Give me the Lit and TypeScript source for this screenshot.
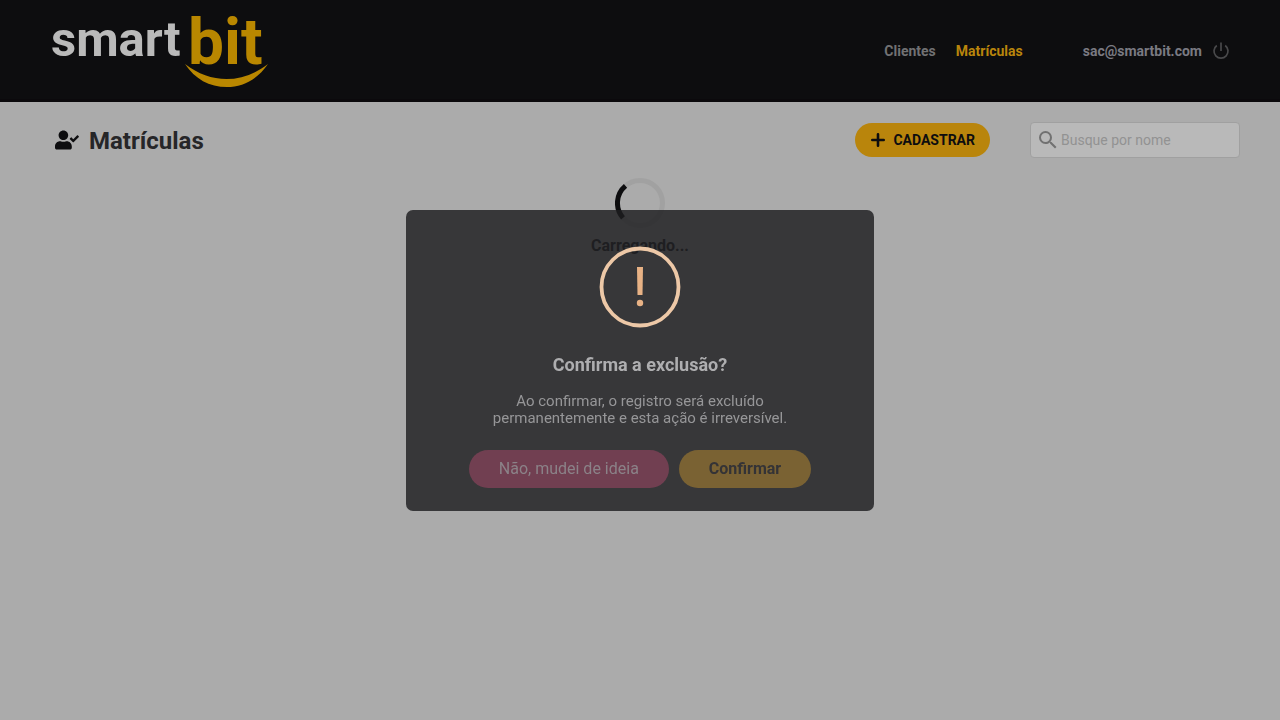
import { LitElement, html, css, svg } from "lit";
import { customElement, state } from "lit/decorators.js";

@customElement("app-root")
export class AppRoot extends LitElement {
  static styles = css`
    :host {
      display: block;
      min-height: 100vh;
      background: #ababab;
      color: #262628;
      font-family: Roboto, sans-serif;
      font-size: 14px;
    }
    * {
      box-sizing: border-box;
    }
    button,
    input {
      font: inherit;
      margin: 0;
    }
    header {
      height: 102px;
      padding: 0 50px;
      background: #0d0d0f;
      box-shadow: inset 0 -3px #0b090c;
      display: flex;
      align-items: center;
      justify-content: space-between;
    }
    .logo svg {
      display: block;
      overflow: visible;
    }
    .smart {
      font-size: 49px;
      font-weight: 700;
      fill: #bababa;
    }
    .bit {
      font-size: 64px;
      font-weight: 700;
      fill: #b98700;
    }
    .smile {
      fill: #b98700;
    }
    nav,
    .account {
      display: flex;
      align-items: center;
    }
    nav {
      gap: 20px;
      margin-left: auto;
      margin-right: 60px;
    }
    a {
      color: #717173;
      font-weight: 700;
      text-decoration: none;
    }
    a.active {
      color: #b9850c;
    }
    .account {
      gap: 10px;
      color: #7a7a82;
      font-weight: 700;
    }
    .power {
      display: flex;
      padding: 0;
      border: 0;
      background: none;
      color: #49494b;
    }
    .toolbar {
      display: flex;
      align-items: center;
      padding: 20px 40px 0 55px;
    }
    h1 {
      display: flex;
      align-items: flex-start;
      gap: 10px;
      margin: 0;
      padding-top: 2px;
      font-size: 24px;
      line-height: 28px;
    }
    h1 svg {
      margin-top: 3px;
      color: #0d0d0f;
    }
    .add {
      display: flex;
      align-items: center;
      gap: 8px;
      height: 34px;
      margin-left: auto;
      padding: 0 15px 0 16px;
      border: 0;
      border-radius: 17px;
      background: #b9850c;
      color: #0d0d0f;
      font-weight: 700;
    }
    .search {
      display: flex;
      align-items: center;
      gap: 1px;
      width: 210px;
      height: 36px;
      margin-left: 40px;
      padding-left: 5px;
      border: 1px solid #a0a0a0;
      border-radius: 4px;
      background: #b9b9b9;
      color: #717171;
    }
    .search input {
      flex: 1;
      min-width: 0;
      padding: 0;
      border: 0;
      outline: 0;
      background: none;
    }
    .search input::placeholder {
      color: #929292;
      opacity: 1;
    }
    .loading {
      display: flex;
      flex-direction: column;
      align-items: center;
      gap: 8px;
      padding-top: 20px;
      font-size: 16px;
      line-height: 19px;
      font-weight: 700;
    }
    .spinner {
      width: 50px;
      height: 50px;
    }
    .backdrop {
      position: fixed;
      inset: 0;
      display: flex;
      align-items: center;
      justify-content: center;
    }
    .modal {
      display: flex;
      flex-direction: column;
      align-items: center;
      width: 468px;
      max-width: 100%;
      padding: 36px 60px 23px;
      border-radius: 7px;
      background: rgba(29, 29, 32, 0.82);
      text-align: center;
    }
    .modal h2 {
      margin: 26px 0 0;
      color: #aeaeb0;
      font-size: 18px;
      line-height: 22px;
    }
    .modal p {
      margin: 17px 0 0;
      max-width: 300px;
      color: #969698;
      font-size: 15px;
      line-height: 17px;
    }
    .actions {
      display: flex;
      gap: 10px;
      margin-top: 23px;
    }
    .actions button {
      height: 38px;
      padding: 0 30px;
      border: 0;
      border-radius: 19px;
      font-size: 16px;
      white-space: nowrap;
    }
    .cancel {
      background: #713f51;
      color: #8b8288;
    }
    .actions .confirm {
      background: #7a6233;
      color: #343336;
      font-weight: 700;
    }
  `;

  @state() private confirming = true;

  private close() {
    this.confirming = false;
  }

  private logo() {
    return html`<svg width="220" height="76" viewBox="0 0 220 76" role="img" aria-label="smart bit">
      ${svg`<text class="smart" x="1" y="43">smart</text>
      <text class="bit" x="138" y="51">bit</text>
      <path class="smile" d="M135 51C161 71 192 71 218 51C207 67 192 74 177 74C159 74 145 66 135 51Z" />`}
    </svg>`;
  }

  private dialog() {
    return html`<div class="backdrop">
      <section class="modal" role="dialog" aria-modal="true" aria-labelledby="title">
        <svg width="82" height="82" viewBox="0 0 82 82" fill="none" aria-hidden="true">
          <circle cx="41" cy="41" r="38.5" stroke="#edc8a7" stroke-width="3.8" />
          <path d="M38 21h6l-.5 28h-5z" fill="#e8b285" />
          <circle cx="41" cy="57" r="3.2" fill="#e8b285" />
        </svg>
        <h2 id="title">Confirma a exclusão?</h2>
        <p>Ao confirmar, o registro será excluído permanentemente e esta ação é irreversível.</p>
        <div class="actions">
          <button class="cancel" @click=${this.close}>Não, mudei de ideia</button>
          <button class="confirm" @click=${this.close}>Confirmar</button>
        </div>
      </section>
    </div>`;
  }

  render() {
    return html`
      <header>
        <div class="logo">${this.logo()}</div>
        <nav>
          <a href="#clientes">Clientes</a>
          <a class="active" href="#matriculas">Matrículas</a>
        </nav>
        <div class="account">
          <span>sac@smartbit.com</span>
          <button class="power" aria-label="Sair">
            <svg width="18" height="18" viewBox="0 0 18 18" fill="none" stroke="currentColor" stroke-width="1.7">
              <path d="M9 .5v8.500M4.800 3.500a7 7 0 1 0 8.400 0" />
            </svg>
          </button>
        </div>
      </header>
      <main>
        <div class="toolbar">
          <h1>
            <svg width="24" height="20" viewBox="0 0 640 512" fill="currentColor" aria-hidden="true">
              <path d="M224 256c70.700 0 128-57.300 128-128S294.700 0 224 0 96 57.300 96 128s57.300 128 128 128zm89.600 32h-16.700c-22.200 10.200-46.900 16-72.900 16s-50.600-5.800-72.900-16h-16.700C60.200 288 0 348.200 0 422.400V464c0 26.500 21.500 48 48 48h352c26.500 0 48-21.500 48-48v-41.600c0-74.200-60.200-134.400-134.400-134.400zM636.600 159.600l-27.800-28.200c-4.600-4.700-12.100-4.700-16.800-.1l-104.800 104-45.500-45.800c-4.600-4.700-12.100-4.700-16.800-.1l-28.100 27.900c-4.700 4.600-4.700 12.100-.1 16.800l81.700 82.300c4.600 4.700 12.100 4.700 16.800.1l141.300-140.200c4.600-4.700 4.700-12.200.1-16.700z" />
            </svg>
            Matrículas
          </h1>
          <button class="add">
            <svg width="14" height="14" viewBox="0 0 14 14" fill="none" stroke="currentColor" stroke-width="2.600" stroke-linecap="round" aria-hidden="true">
              <path d="M7 1.300v11.400M1.300 7h11.400" />
            </svg>
            CADASTRAR
          </button>
          <label class="search">
            <svg width="24" height="24" viewBox="0 0 24 24" fill="currentColor" aria-hidden="true">
              <path d="M15.500 14h-.79l-.28-.27A6.471 6.471 0 0 0 16 9.500 6.500 6.500 0 1 0 9.500 16c1.610 0 3.090-.59 4.230-1.570l.27.28v.79l5 4.990L20.490 19l-4.990-5zm-6 0C7.010 14 5 11.990 5 9.500S7.010 5 9.500 5 14 7.010 14 9.500 11.990 14 9.500 14z" />
            </svg>
            <input type="text" placeholder="Busque por nome" aria-label="Busque por nome" />
          </label>
        </div>
        <div class="loading">
          <svg class="spinner" viewBox="0 0 50 50" fill="none" stroke-width="5" aria-hidden="true">
            <circle cx="25" cy="25" r="22.5" stroke="#a1a1a1" />
            <path d="M10.500 7.800A22.500 22.500 0 0 0 8 39.800" stroke="#0d0d0f" />
          </svg>
          <span>Carregando...</span>
        </div>
      </main>
      ${this.confirming ? this.dialog() : null}
    `;
  }
}
